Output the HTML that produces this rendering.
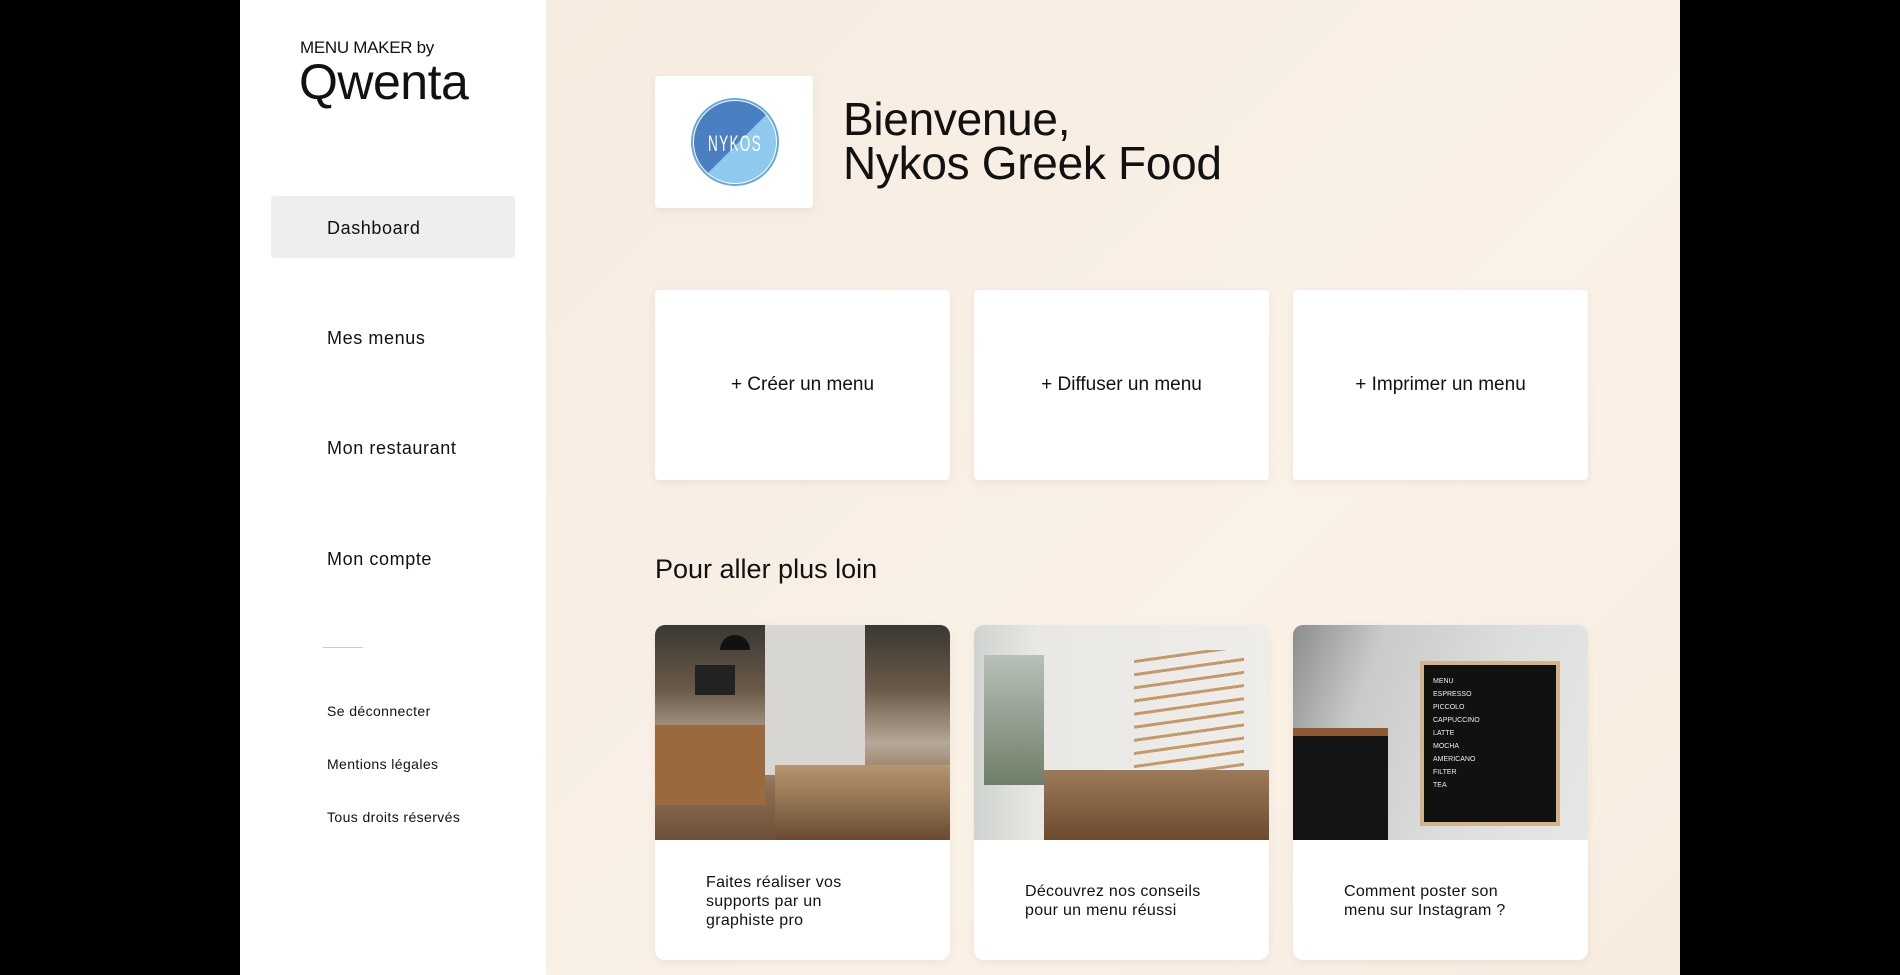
<!DOCTYPE html>
<html><head><meta charset="utf-8"><style>
*{margin:0;padding:0;box-sizing:border-box}
body{width:1900px;height:975px;background:#000;position:relative;overflow:hidden;font-family:"Liberation Sans",sans-serif;color:#111}
.side{position:absolute;left:240px;top:0;width:306px;height:975px;background:#fff}
.main{position:absolute;left:546px;top:0;width:1134px;height:975px;background:linear-gradient(135deg,#f6ebe0,#faf1e7 60%,#f8ece0)}
.abs{position:absolute}
.nav{position:absolute;left:87px;font-size:18px;line-height:20px;letter-spacing:.6px}
.small{position:absolute;left:87px;font-size:14px;letter-spacing:.4px}
.card{position:absolute;background:#fff;border-radius:4px;box-shadow:0 3px 8px rgba(120,90,60,.08)}
.act{top:290px;height:190px;width:295px;display:flex;align-items:center;justify-content:center;font-size:19px}
.ic{top:625px;height:335px;width:295px;border-radius:10px;overflow:hidden}
.img{position:absolute;left:0;top:0;width:295px;height:215px;overflow:hidden}
.ct{position:absolute;left:51px;font-size:16px;line-height:19px;letter-spacing:.3px}
</style></head><body>
<div class="side">
  <div class="abs" style="left:60px;top:38px;font-size:17px;letter-spacing:-.3px">MENU MAKER by</div>
  <div class="abs" style="left:59px;top:53px;font-size:50px;letter-spacing:-.5px;font-weight:normal">Qwenta</div>
  <div class="abs" style="left:31px;top:196px;width:244px;height:62px;background:#eeeeee;border-radius:4px"></div>
  <div class="nav" style="top:218px">Dashboard</div>
  <div class="nav" style="top:328px">Mes menus</div>
  <div class="nav" style="top:438px">Mon restaurant</div>
  <div class="nav" style="top:549px">Mon compte</div>
  <div class="abs" style="left:83px;top:647px;width:40px;height:1px;background:#ccc"></div>
  <div class="small" style="top:703px">Se déconnecter</div>
  <div class="small" style="top:756px">Mentions légales</div>
  <div class="small" style="top:809px">Tous droits réservés</div>
</div>
<div class="main">
  <div class="card" style="left:109px;top:76px;width:158px;height:132px">
    <svg width="158" height="132" style="position:absolute;left:0;top:0">
      <defs><clipPath id="c"><circle cx="80" cy="66" r="41"/></clipPath></defs>
      <circle cx="80" cy="66" r="44" fill="#6aa7de"/>
      <circle cx="80" cy="66" r="42" fill="#fff"/>
      <g clip-path="url(#c)"><rect x="30" y="20" width="100" height="100" fill="#8fcaee"/><polygon points="30,20 130,20 30,120" fill="#4a7fc1"/></g>
      <text x="80" y="75" text-anchor="middle" fill="#fff" font-size="22" transform="translate(80 0) scale(.62 1) translate(-80 0)" font-family="Liberation Sans,sans-serif" letter-spacing="2">NYKOS</text>
    </svg>
  </div>
  <div class="abs" style="left:297px;top:97px;font-size:46px;line-height:44px;letter-spacing:-.3px">Bienvenue,<br>Nykos Greek Food</div>
  <div class="card act" style="left:109px">+ Créer un menu</div>
  <div class="card act" style="left:428px">+ Diffuser un menu</div>
  <div class="card act" style="left:747px">+ Imprimer un menu</div>
  <div class="abs" style="left:109px;top:554px;font-size:27px">Pour aller plus loin</div>
  <div class="card ic" style="left:109px">
    <div class="img" style="background:linear-gradient(180deg,#3a3733 0%,#6b5a48 30%,#b5a898 55%,#8c6f52 75%,#6d5038 100%)">
      <div class="abs" style="left:110px;top:0;width:100px;height:150px;background:#d8d6d2"></div>
      <div class="abs" style="left:0;top:100px;width:110px;height:80px;background:#9a6a3e"></div>
      <div class="abs" style="left:40px;top:40px;width:40px;height:30px;background:#222"></div>
      <div class="abs" style="left:65px;top:10px;width:30px;height:15px;background:#111;border-radius:15px 15px 0 0"></div>
      <div class="abs" style="left:120px;top:140px;width:175px;height:75px;background:linear-gradient(#b79770,#6a4b32)"></div>
    </div>
    <div class="ct" style="top:248px">Faites réaliser vos<br>supports par un<br>graphiste pro</div>
  </div>
  <div class="card ic" style="left:428px">
    <div class="img" style="background:linear-gradient(90deg,#cfd3cf 0%,#e9e8e4 22%,#eeedea 100%)">
      <div class="abs" style="left:10px;top:30px;width:60px;height:130px;background:linear-gradient(#b8c0b8,#6f7e68)"></div>
      <div class="abs" style="left:160px;top:25px;width:110px;height:120px;background:repeating-linear-gradient(172deg,transparent 0 10px,#c49a6c 10px 13px)"></div>
      <div class="abs" style="left:70px;top:145px;width:225px;height:70px;background:linear-gradient(#9b7a5a,#6d4a2e)"></div>
    </div>
    <div class="ct" style="top:257px">Découvrez nos conseils<br>pour un menu réussi</div>
  </div>
  <div class="card ic" style="left:747px">
    <div class="img" style="background:linear-gradient(110deg,#8b8c8c 0%,#c9cbcb 25%,#dcdedd 60%,#e6e7e6 100%)">
      <div class="abs" style="left:0;top:110px;width:95px;height:105px;background:#141414"></div>
      <div class="abs" style="left:0;top:103px;width:95px;height:8px;background:#8a5b34"></div>
      <div class="abs" style="left:127px;top:36px;width:140px;height:165px;background:#111;border:4px solid #d4b28a"></div>
      <div class="abs" style="left:140px;top:50px;color:#eee;font-size:7px;line-height:13px;width:110px">MENU<br>ESPRESSO<br>PICCOLO<br>CAPPUCCINO<br>LATTE<br>MOCHA<br>AMERICANO<br>FILTER<br>TEA</div>
    </div>
    <div class="ct" style="top:257px">Comment poster son<br>menu sur Instagram ?</div>
  </div>
</div>
</body></html>
